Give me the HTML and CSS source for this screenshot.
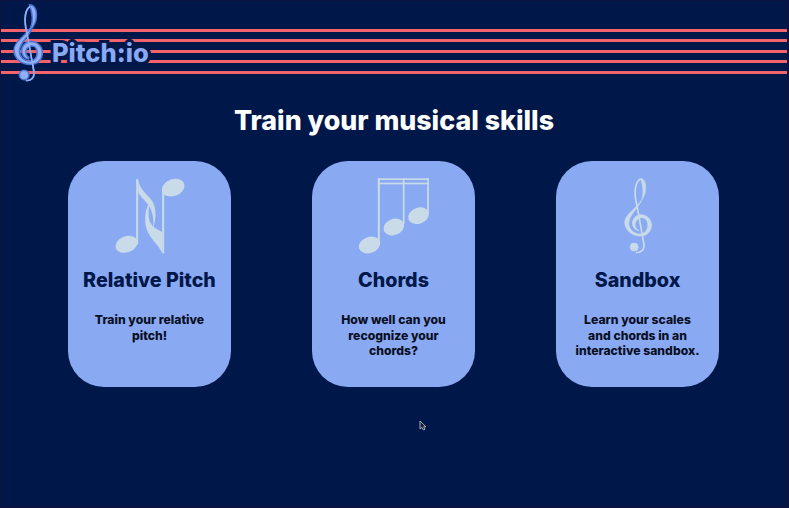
FILE: index.html
```html
<!DOCTYPE html>
<html lang="en">
<head>
    <meta charset="UTF-8">
    <meta name="viewport" content="width=device-width, initial-scale=1.0">
    <title>Pitch.io</title>
    <link rel="stylesheet" href="styles.css">
</head>
<body>
    <svg class="defs" width="0" height="0">
        <defs>
            <g id="clef">
                <path d="M150 40C164 42 168 62 164 82C160 102 142 120 130 132C112 148 102 160 103 174C104 196 124 213 150 213C170 213 183 198 183 180C183 162 168 149 152 149C136 149 125 162 126 176C127 188 136 196 146 197C136 192 133 184 134 176C136 165 145 158 154 158C165 158 172 168 172 180C172 196 162 207 148 207C128 207 113 190 115 172C117 150 140 132 150 112C157 98 160 80 155 58C153 48 151 44 150 40Z"/>
                <path class="clef-stem" d="M150 42C134 50 129 80 139 120L160 235C163 255 150 265 136 262"/>
                <circle cx="131" cy="246" r="12"/>
            </g>
        </defs>
    </svg>

    <header class="header">
        <svg class="logo-clef" viewBox="95 35 95 235">
            <use class="clef-base" href="#clef"/>
            <use class="clef-light" href="#clef"/>
        </svg>
        <div class="logo-text">Pitch:io</div>
    </header>

    <h1>Train your musical skills</h1>

    <main class="cards">
        <div class="card">
            <svg class="icon" viewBox="118.500 66 300 246">
                <ellipse cx="198" cy="268" rx="34" ry="24" transform="rotate(-20 198 268)"/>
                <ellipse cx="338" cy="98" rx="35" ry="25" transform="rotate(-20 338 98)"/>
                <rect x="227" y="72" width="6" height="196"/>
                <rect x="305" y="98" width="6" height="197"/>
                <path d="M233 72C236 105 262 118 275 138C288 160 288 190 277 222C281 195 278 170 262 148C250 132 233 120 233 108Z"/>
                <path d="M305 295C296 270 270 255 258 222C250 190 254 160 270 137C262 165 263 188 270 204C280 222 300 226 305 232Z"/>
            </svg>
            <h2>Relative Pitch</h2>
            <p>Train your relative pitch!</p>
        </div>
        <div class="card">
            <svg class="icon" viewBox="10.500 36 300 246">
                <rect x="112" y="40" width="153" height="5"/>
                <rect x="112" y="53" width="153" height="5"/>
                <rect x="112" y="40" width="6" height="198"/>
                <rect x="187" y="40" width="5" height="138"/>
                <rect x="260" y="40" width="5" height="105"/>
                <ellipse cx="87" cy="240" rx="33" ry="24" transform="rotate(-20 87 240)"/>
                <ellipse cx="160" cy="186" rx="32" ry="24" transform="rotate(-20 160 186)"/>
                <ellipse cx="234" cy="152" rx="32" ry="24" transform="rotate(-20 234 152)"/>
            </svg>
            <h2>Chords</h2>
            <p>How well can you recognize your chords?</p>
        </div>
        <div class="card">
            <svg class="icon icon-clef" viewBox="-7.500 36 300 246">
                <use href="#clef"/>
            </svg>
            <h2>Sandbox</h2>
            <p>Learn your scales<br>and chords in an interactive sandbox.</p>
        </div>
    </main>

    <svg class="cursor" width="8" height="11" viewBox="0 0 8 11">
        <path d="M1 1V9L3 7.500L4.500 10L6 9.200L4.600 6.800H7Z"/>
    </svg>
</body>
</html>
```

FILE: styles.css
```css
* {
    box-sizing: border-box;
}
html, body {
    height: 100%;
}
body {
    position: relative;
    margin: 0;
    overflow: hidden;
    background-color: #00174a;
    border: 1px solid #0e1240;
    border-right-width: 2px;
    border-bottom-width: 2px;
    color: #00174a;
    font-family: "Inter", "Liberation Sans", sans-serif;
}
.defs {
    position: absolute;
}
.header {
    display: flex;
    align-items: center;
    height: 89px;
    padding-left: 11px;
    background-image: repeating-linear-gradient(to bottom, #f4636c 0, #f4636c 3px, transparent 3px, transparent 10.500px);
    background-size: 100% 46px;
    background-position: 0 28px;
    background-repeat: no-repeat;
}
.logo-clef {
    width: 32px;
    height: 79px;
    margin-top: -4px;
    overflow: visible;
}
.clef-base {
    fill: #4d74d6;
    color: #4d74d6;
    stroke: #4d74d6;
    stroke-width: 9;
}
.clef-light {
    fill: #8fb0f3;
    color: #8fb0f3;
}
.clef-stem {
    fill: none;
    stroke: currentColor;
    stroke-width: 5;
}
.logo-text {
    margin: 14px 0 0 8px;
    color: #89aaf2;
    font-size: 25.500px;
    font-weight: 800;
    line-height: 30px;
    -webkit-text-stroke: 6px #00174a;
    paint-order: stroke fill;
}
h1 {
    margin: 12px 0 0;
    color: #fff;
    font-size: 26.800px;
    font-weight: 800;
    line-height: 36px;
    text-align: center;
}
.cards {
    display: flex;
    justify-content: space-between;
    margin-top: 23px;
    padding: 0 68px 0 67px;
}
.card {
    display: flex;
    flex-direction: column;
    align-items: center;
    width: 163px;
    height: 226px;
    padding-top: 16px;
    background-color: #89aaf2;
    border-radius: 36px;
    text-align: center;
}
.icon {
    width: 100px;
    height: 82px;
    fill: #c9dbe8;
    color: #c9dbe8;
}
.icon-clef {
    stroke: #c9dbe8;
    stroke-width: 2;
}
h2 {
    margin: 8px 0 0;
    font-size: 19.700px;
    font-weight: 800;
    line-height: 26px;
}
.card p {
    width: 134px;
    margin: 19px 0 0;
    font-size: 12.200px;
    font-weight: 800;
    line-height: 15.500px;
    color: #0a0f24;
}
.cursor {
    position: absolute;
    left: 418px;
    top: 419px;
    fill: #1c2233;
    stroke: #c9ccd6;
    stroke-width: 0.800;
}
```
